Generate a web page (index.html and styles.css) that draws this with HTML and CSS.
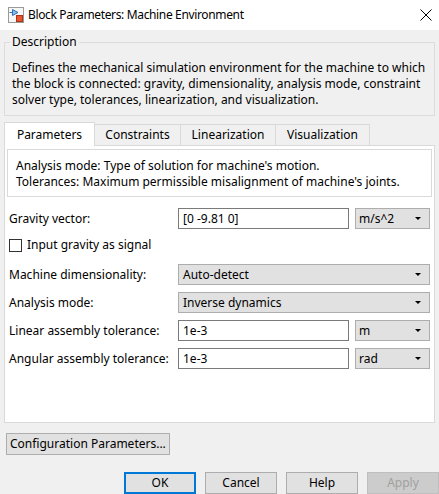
FILE: index.html
```html
<!DOCTYPE html>
<html lang="en">
<head>
<meta charset="utf-8">
<title>Block Parameters: Machine Environment</title>
<link rel="stylesheet" href="styles.css">
</head>
<body>
<div class="window">
  <header class="titlebar">
    <svg class="app-icon" width="16" height="16" viewBox="0 0 16 16">
      <rect x="0.5" y="0.5" width="15" height="15" fill="#f6f6f6" stroke="#9a9a9a"/>
      <path d="M1.5 5.5 H4.5" stroke="#2f6fb5" stroke-width="1"/>
      <path d="M4.5 2.5 L10 5.5 L4.5 8.5 Z" fill="#8cbbe8" stroke="#2f6fb5" stroke-width="1"/>
      <rect x="8.5" y="8.5" width="6" height="6" fill="#e8552c" stroke="#a8321a" stroke-width="1"/>
    </svg>
    <span class="title">Block Parameters: Machine Environment</span>
    <svg class="close" width="12" height="12" viewBox="0 0 12 12">
      <path d="M0.5 0.5 L11.5 11.5 M11.5 0.5 L0.5 11.5" stroke="#000" stroke-width="1"/>
    </svg>
  </header>

  <main class="content">
    <fieldset class="group">
      <legend>Description</legend>
      <p class="desc">Defines the mechanical simulation environment for the machine to which the block is connected: gravity, dimensionality, analysis mode, constraint solver type, tolerances, linearization, and visualization.</p>
    </fieldset>

    <nav class="tabbar">
      <div class="tab tab-active tab-params">Parameters</div>
      <div class="tab tab-constraints">Constraints</div>
      <div class="tab tab-lin">Linearization</div>
      <div class="tab tab-vis">Visualization</div>
    </nav>

    <section class="panel">
      <div class="info">
        <div>Analysis mode: Type of solution for machine's motion.</div>
        <div>Tolerances: Maximum permissible misalignment of machine's joints.</div>
      </div>

      <div class="form">
        <label class="lbl">Gravity vector:</label>
        <div class="edit">[0 -9.81 0]</div>
        <div class="combo">m/s^2<span class="caret"></span></div>

        <div class="check-row">
          <span class="checkbox"></span>
          <span>Input gravity as signal</span>
        </div>

        <label class="lbl">Machine dimensionality:</label>
        <div class="combo combo-wide">Auto-detect<span class="caret"></span></div>

        <label class="lbl">Analysis mode:</label>
        <div class="combo combo-wide">Inverse dynamics<span class="caret"></span></div>

        <label class="lbl">Linear assembly tolerance:</label>
        <div class="edit">1e-3</div>
        <div class="combo">m<span class="caret"></span></div>

        <label class="lbl">Angular assembly tolerance:</label>
        <div class="edit">1e-3</div>
        <div class="combo">rad<span class="caret"></span></div>
      </div>
    </section>

    <div class="config-row">
      <button class="btn btn-config">Configuration Parameters...</button>
    </div>

    <div class="actions">
      <button class="btn btn-default">OK</button>
      <button class="btn">Cancel</button>
      <button class="btn">Help</button>
      <button class="btn btn-disabled">Apply</button>
    </div>
  </main>
</div>
</body>
</html>
```

FILE: styles.css
```css
* { box-sizing: border-box; }

html, body {
  margin: 0;
  padding: 0;
  background: #f0f0f0;
}

body {
  font-family: "Noto Sans", "Open Sans", sans-serif;
  font-size: 12px;
  line-height: 16px;
  color: #000;
  overflow: hidden;
}

.window {
  width: 439px;
  height: 494px;
  display: flex;
  flex-direction: column;
  background: #f0f0f0;
}

.titlebar {
  height: 30px;
  flex: none;
  background: #fff;
  display: flex;
  align-items: center;
  padding-left: 8px;
  padding-right: 8px;
}

.app-icon {
  flex: none;
  margin-right: 4px;
  margin-top: -1px;
}

.title {
  flex: 1;
  white-space: nowrap;
  letter-spacing: -0.35px;
}

.close {
  flex: none;
  margin-right: -1px;
  margin-top: -1px;
}

.content {
  flex: 1;
  display: flex;
  flex-direction: column;
  padding: 4px 4px 0 4px;
  min-height: 0;
}

.group {
  margin: 0;
  padding: 10px 7px 7px 7px;
  border: 1px solid #dcdcdc;
  min-width: 0;
}

.group legend {
  padding: 0 2px;
  margin-left: -2px;
  line-height: 16px;
}

.desc {
  margin: 0;
}

.tabbar {
  margin-top: 6px;
  height: 24px;
  flex: none;
  display: flex;
  align-items: flex-end;
  border-bottom: 1px solid #d9d9d9;
}

.tab {
  flex: none;
  height: 21px;
  padding: 2px 0 3px;
  text-align: center;
  background: #f0f0f0;
  border: 1px solid #d9d9d9;
  border-bottom: none;
  border-left: none;
  white-space: nowrap;
}

.tab-active {
  height: 24px;
  padding-top: 4px;
  margin-bottom: -1px;
  background: #fff;
  border-left: 1px solid #d9d9d9;
}

.tab-params { width: 91px; }
.tab-constraints { width: 86px; }
.tab-lin { width: 95px; }
.tab-vis { width: 94px; }

.panel {
  flex: 1;
  background: #fff;
  border: 1px solid #d9d9d9;
  border-top: none;
  padding: 3px 2px 0 2px;
  min-height: 0;
}

.info {
  border: 1px solid #d9d9d9;
  padding: 8px 8px 6px;
  white-space: nowrap;
}

.form {
  margin-top: 11px;
  padding-left: 2px;
  display: grid;
  grid-template-columns: 163px 171px 75px;
  column-gap: 6px;
  row-gap: 7px;
  grid-auto-rows: 21px;
  align-items: center;
}

.lbl {
  white-space: nowrap;
}

.edit {
  height: 21px;
  border: 1px solid #7a7a7a;
  background: #fff;
  padding: 2px 4px 0;
  white-space: nowrap;
}

.combo {
  height: 21px;
  border: 1px solid #adadad;
  background: #e1e1e1;
  padding: 2px 4px 0 3px;
  display: flex;
  align-items: flex-start;
  justify-content: space-between;
  white-space: nowrap;
}

.combo-wide {
  grid-column: 2 / 4;
  padding-left: 4px;
}

.caret {
  flex: none;
  width: 0;
  height: 0;
  margin-top: 6px;
  margin-right: 4px;
  border-left: 3px solid transparent;
  border-right: 3px solid transparent;
  border-top: 3px solid #000;
}

.check-row {
  grid-column: 1 / 4;
  height: 18px;
  display: flex;
  align-items: center;
  gap: 5px;
  margin-top: -3px;
}

.checkbox {
  flex: none;
  width: 13px;
  height: 13px;
  border: 1px solid #333;
  background: #fff;
}

.config-row {
  flex: none;
  margin-top: 10px;
  padding-left: 2px;
  display: flex;
}

.btn {
  font: inherit;
  color: #000;
  height: 22px;
  margin: 0;
  padding: 0 3px;
  background: #e1e1e1;
  border: 1px solid #adadad;
  border-radius: 0;
  line-height: 18px;
}

.btn-config {
  padding: 0 3px 0 3px;
}

.actions {
  flex: none;
  margin-top: 17px;
  margin-right: -4px;
  display: flex;
  justify-content: flex-end;
  gap: 9px;
}

.actions .btn {
  width: 72px;
}

.btn-default {
  border: 2px solid #0078d7;
}

.btn-disabled {
  background: #cccccc;
  border-color: #bfbfbf;
  color: #a0a0a0;
}
```
